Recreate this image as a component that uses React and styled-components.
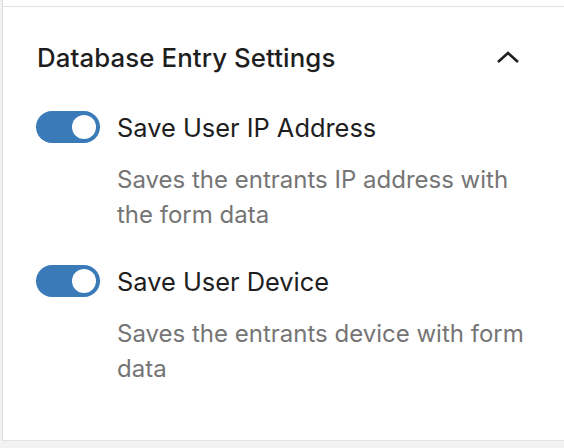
import React, { useState } from 'react';
import styled, { createGlobalStyle } from 'styled-components';

const GlobalStyle = createGlobalStyle`
    html, body {
        margin: 0;
        padding: 0;
        background: #ffffff;
    }
    body {
        font-family: Inter, "Liberation Sans", sans-serif;
        -webkit-font-smoothing: antialiased;
    }
`;

const Page = styled.div`
    width: 564px;
    height: 448px;
    display: flex;
    flex-direction: column;
    background: #f2f2f2;
    overflow: hidden;
`;

const Panel = styled.section`
    margin-left: 2px;
    padding-top: 6px;
    height: 434px;
    background: #ffffff;
    border-left: 1px solid #dddddd;
    border-bottom: 1px solid #e2e2e2;
    display: flex;
    flex-direction: column;
`;

const TopRule = styled.div`
    height: 1px;
    background: #dbe2ea;
`;

const PanelHeader = styled.button`
    display: flex;
    align-items: center;
    justify-content: space-between;
    width: 100%;
    height: 100px;
    padding: 0 44px 0 34px;
    background: none;
    border: none;
    cursor: pointer;
    text-align: left;
    font-family: inherit;
`;

const Title = styled.h2`
    margin: 0;
    font-size: 25.8px;
    font-weight: 500;
    color: #1e1e1e;
    letter-spacing: 0.1px;
`;

const Chevron = styled.svg`
    width: 24px;
    height: 14px;
    stroke: #1e1e1e;
    fill: none;
`;

const PanelBody = styled.div`
    display: flex;
    flex-direction: column;
    gap: 33px;
    padding: 4px 30px 0 33px;
`;

const Setting = styled.div`
    display: flex;
    flex-direction: column;
`;

const ToggleRow = styled.label`
    display: flex;
    align-items: center;
    gap: 17px;
    height: 32px;
    cursor: pointer;
`;

const Track = styled.span`
    position: relative;
    flex: none;
    width: 64px;
    height: 32px;
    border-radius: 16px;
    background: ${props => (props.$on ? '#3a7ab9' : '#ffffff')};
    border: ${props => (props.$on ? 'none' : '2px solid #1e1e1e')};
    box-sizing: border-box;
`;

const Knob = styled.span`
    position: absolute;
    top: 4px;
    left: ${props => (props.$on ? '36px' : '4px')};
    width: 24px;
    height: 24px;
    border-radius: 50%;
    background: ${props => (props.$on ? '#ffffff' : '#1e1e1e')};
`;

const Label = styled.span`
    font-size: 25.4px;
    color: #1e1e1e;
`;

const Help = styled.p`
    margin: 19px 0 0 81px;
    font-size: 24px;
    line-height: 35px;
    color: #757575;
`;

const ChevronUp = () => (
    <Chevron viewBox="0 0 24 14">
        <polyline points="2,12 12,3 22,12" strokeWidth="2.6" />
    </Chevron>
);

const Toggle = ({ label, help, on, onChange }) => (
    <Setting>
        <ToggleRow onClick={onChange}>
            <Track $on={on}>
                <Knob $on={on} />
            </Track>
            <Label>{label}</Label>
        </ToggleRow>
        <Help>{help}</Help>
    </Setting>
);

export default function App() {
    const [saveIp, setSaveIp] = useState(true);
    const [saveDevice, setSaveDevice] = useState(true);

    return (
        <Page>
            <GlobalStyle />
            <Panel>
                <TopRule />
                <PanelHeader aria-expanded="true">
                    <Title>Database Entry Settings</Title>
                    <ChevronUp />
                </PanelHeader>
                <PanelBody>
                    <Toggle
                        label="Save User IP Address"
                        help="Saves the entrants IP address with the form data"
                        on={saveIp}
                        onChange={() => setSaveIp(!saveIp)}
                    />
                    <Toggle
                        label="Save User Device"
                        help="Saves the entrants device with form data"
                        on={saveDevice}
                        onChange={() => setSaveDevice(!saveDevice)}
                    />
                </PanelBody>
            </Panel>
        </Page>
    );
}
